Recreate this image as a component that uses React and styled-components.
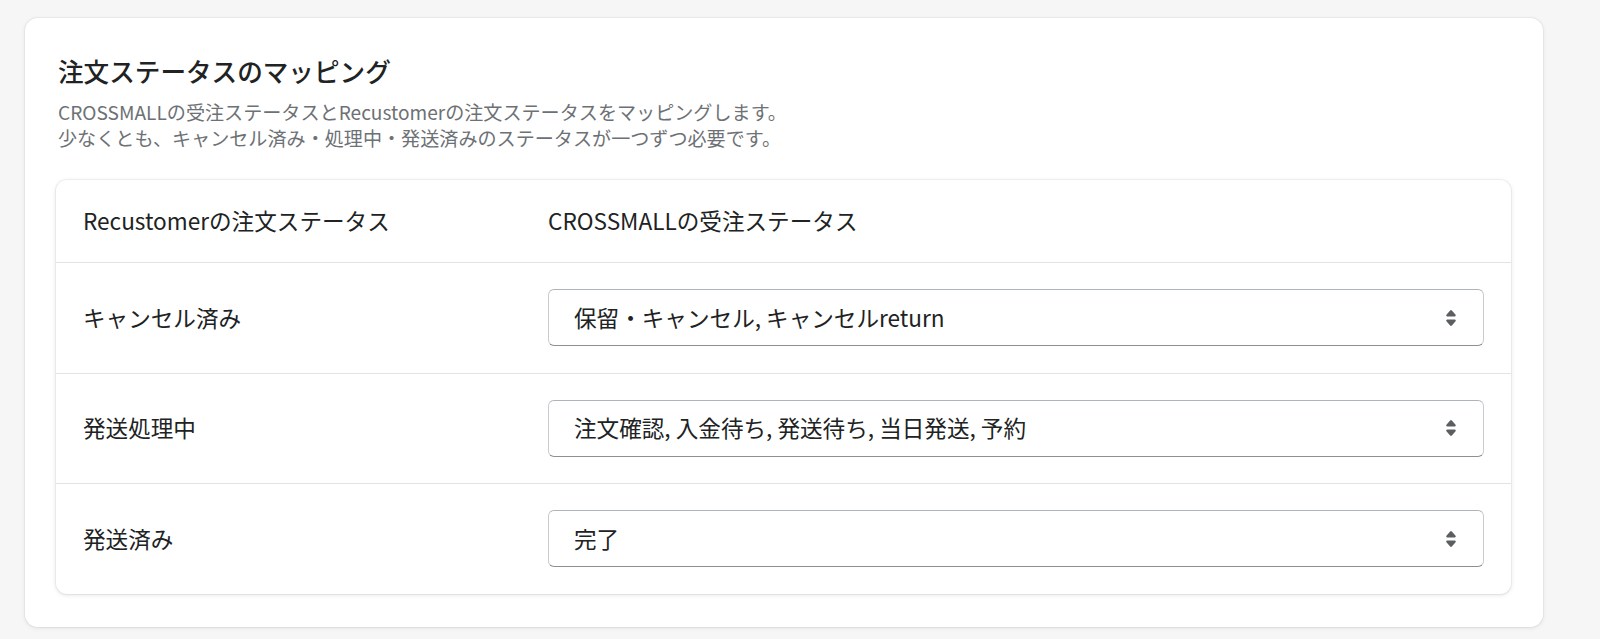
import React from 'react'
import styled, { createGlobalStyle } from 'styled-components'

const GlobalStyle = createGlobalStyle`
  body {
    margin: 0;
    background: #f6f6f7;
    font-family: "Noto Sans CJK JP", "Noto Sans", sans-serif;
    color: #202223;
  }
`

const rows = [
  { label: 'キャンセル済み', value: '保留・キャンセル, キャンセルreturn' },
  { label: '発送処理中', value: '注文確認, 入金待ち, 発送待ち, 当日発送, 予約' },
  { label: '発送済み', value: '完了' },
]

const Page = styled.div`
  padding: 18px 57px 12px 25px;
`

const Card = styled.section`
  background: #fff;
  border-radius: 13px;
  box-shadow: 0 0 0 1px rgba(63, 63, 68, 0.04), 0 1px 4px rgba(63, 63, 68, 0.12);
  padding: 33px 32px 33px 31px;
`

const Title = styled.h2`
  margin: 0 0 0 2px;
  font-size: 25.6px;
  line-height: 40px;
  font-weight: 500;
`

const Description = styled.p`
  margin: 9px 0 29px 2px;
  font-size: 19.1px;
  line-height: 25.5px;
  color: #6d7175;
`

const Table = styled.div`
  border-radius: 11px;
  background: #fff;
  box-shadow: 0 0 0 1px rgba(63, 63, 68, 0.05), 0 1px 4px rgba(63, 63, 68, 0.16);
  overflow: hidden;
`

const Row = styled.div`
  display: grid;
  grid-template-columns: 465px 1fr;
  align-items: center;
  height: ${p => (p.$head ? 82 : 110.5)}px;
  box-sizing: border-box;
  border-top: ${p => (p.$head ? 'none' : '1px solid #e1e3e5')};
`

const Cell = styled.div`
  padding: 0 27px;
  font-size: 22.6px;
  line-height: 32px;
  color: #202223;
`

const Select = styled.div`
  display: flex;
  align-items: center;
  justify-content: space-between;
  height: 57px;
  box-sizing: border-box;
  padding: 0 16px 0 25px;
  border: 1px solid #c9cccf;
  border-top-color: #aeb4b9;
  border-bottom-color: #8c9196;
  border-radius: 6px;
  background: #fff;
  font-size: 22.6px;
  color: #202223;
`

const Arrows = () => (
  <svg width="32" height="32" viewBox="0 0 20 20" aria-hidden="true">
    <path
      fill="#5c5f62"
      d="M7.676 9h4.648c.563 0 .879-.603.53-1.014l-2.323-2.746a.708.708 0 0 0-1.062 0l-2.324 2.746c-.347.411-.032 1.014.531 1.014Zm4.648 2h-4.648c-.563 0-.878.603-.53 1.014l2.323 2.746c.27.32.792.32 1.062 0l2.323-2.746c.349-.411.033-1.014-.53-1.014Z"
    />
  </svg>
)

export default function App() {
  return (
    <>
      <GlobalStyle />
      <Page>
        <Card>
          <Title>注文ステータスのマッピング</Title>
          <Description>
            CROSSMALLの受注ステータスとRecustomerの注文ステータスをマッピングします。
            <br />
            少なくとも、キャンセル済み・処理中・発送済みのステータスが一つずつ必要です。
          </Description>
          <Table>
            <Row $head>
              <Cell>Recustomerの注文ステータス</Cell>
              <Cell>CROSSMALLの受注ステータス</Cell>
            </Row>
            {rows.map(r => (
              <Row key={r.label}>
                <Cell>{r.label}</Cell>
                <Cell>
                  <Select>
                    <span>{r.value}</span>
                    <Arrows />
                  </Select>
                </Cell>
              </Row>
            ))}
          </Table>
        </Card>
      </Page>
    </>
  )
}
